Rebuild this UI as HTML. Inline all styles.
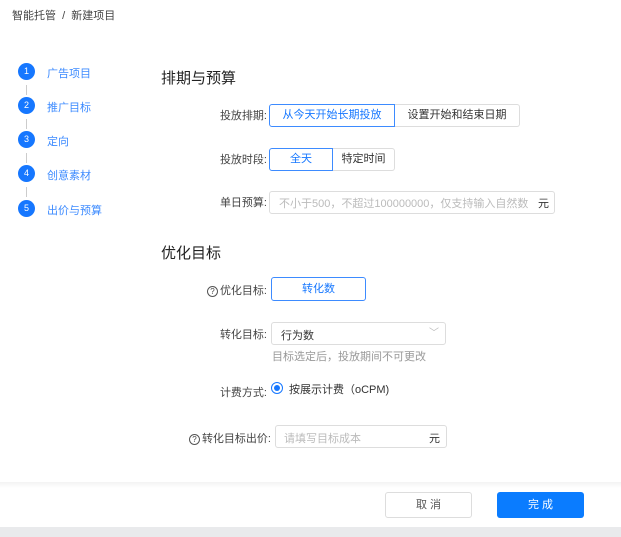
<!DOCTYPE html><html><head><meta charset="utf-8"><style>
*{margin:0;padding:0;box-sizing:border-box}
body{width:621px;height:537px;background:#fff;font-family:"Liberation Sans","Noto Sans CJK SC",sans-serif;font-size:11px;color:#333;position:relative;overflow:hidden}
.a{position:absolute;white-space:nowrap}
.c{width:17px;height:17px;border-radius:50%;background:#1677ff;color:#fff;font-size:9px;text-align:center;line-height:17px;left:18px}
.st{left:47px;color:#3d8bff;font-size:11px}
.ln{left:26px;width:1px;height:10px;background:#ccc}
.lab{text-align:right;color:#444;font-size:11px}
.b{border:1px solid #ddd;text-align:center;font-size:11px;color:#333}
.sel{border-color:#3d8bff;color:#1677ff}
h2{font-size:15px;font-weight:normal;color:#222}
.q{display:inline-block;width:11px;height:11px;border:1px solid #555;border-radius:50%;font-size:8px;line-height:9px;text-align:center;vertical-align:0px;margin-right:2px}
</style></head><body>
<div class="a" style="left:12px;top:7px;font-size:11px;color:#444">智能托管 &nbsp;/&nbsp; 新建项目</div>
<div class="a c" style="top:63px">1</div><div class="a st" style="top:65px">广告项目</div>
<div class="a ln" style="top:85px"></div>
<div class="a c" style="top:97px">2</div><div class="a st" style="top:99px">推广目标</div>
<div class="a ln" style="top:119px"></div>
<div class="a c" style="top:131px">3</div><div class="a st" style="top:133px">定向</div>
<div class="a ln" style="top:153px"></div>
<div class="a c" style="top:165px">4</div><div class="a st" style="top:167px">创意素材</div>
<div class="a ln" style="top:187px"></div>
<div class="a c" style="top:200px">5</div><div class="a st" style="top:202px">出价与预算</div>

<h2 class="a" style="left:161px;top:67px">排期与预算</h2>
<div class="a lab" style="right:354px;top:107px">投放排期:</div>
<div class="a b sel" style="left:269px;top:104px;width:126px;height:23px;line-height:21px;border-radius:3px 0 0 3px">从今天开始长期投放</div>
<div class="a b" style="left:395px;top:104px;width:125px;height:23px;line-height:21px;border-left:none;border-radius:0 3px 3px 0">设置开始和结束日期</div>
<div class="a lab" style="right:354px;top:151px">投放时段:</div>
<div class="a b sel" style="left:269px;top:148px;width:64px;height:23px;line-height:21px;border-radius:3px 0 0 3px">全天</div>
<div class="a b" style="left:333px;top:148px;width:62px;height:23px;line-height:21px;border-left:none;border-radius:0 3px 3px 0">特定时间</div>
<div class="a lab" style="right:354px;top:194px">单日预算:</div>
<div class="a b" style="left:269px;top:191px;width:286px;height:23px;border-radius:3px"></div>
<div class="a" style="left:279px;top:195px;color:#bbb">不小于500，不超过100000000，仅支持输入自然数</div>
<div class="a" style="left:538px;top:195px;color:#333">元</div>

<h2 class="a" style="left:161px;top:242px">优化目标</h2>
<div class="a lab" style="right:354px;top:282px"><span class="q">?</span>优化目标:</div>
<div class="a b sel" style="left:271px;top:277px;width:95px;height:24px;line-height:22px;border-radius:3px">转化数</div>
<div class="a lab" style="right:354px;top:326px">转化目标:</div>
<div class="a b" style="left:271px;top:322px;width:175px;height:23px;border-radius:3px"></div>
<div class="a" style="left:281px;top:327px">行为数</div>
<div class="a" style="left:429px;top:324px;color:#bbb;font-size:10px">﹀</div>
<div class="a" style="left:272px;top:348px;color:#999">目标选定后，投放期间不可更改</div>
<div class="a lab" style="right:354px;top:384px">计费方式:</div>
<div class="a" style="left:271px;top:382px;width:12px;height:12px;border:1px solid #1677ff;border-radius:50%"><div style="margin:2px;width:6px;height:6px;border-radius:50%;background:#1677ff"></div></div>
<div class="a" style="left:289px;top:381px">按展示计费（oCPM)</div>
<div class="a lab" style="right:350px;top:430px"><span class="q">?</span>转化目标出价:</div>
<div class="a b" style="left:275px;top:425px;width:172px;height:23px;border-radius:3px"></div>
<div class="a" style="left:284px;top:430px;color:#bbb">请填写目标成本</div>
<div class="a" style="left:429px;top:430px">元</div>

<div class="a" style="left:0;top:482px;width:621px;height:46px;background:linear-gradient(#f3f3f3,#fff 6px)"></div>
<div class="a b" style="left:385px;top:492px;width:87px;height:26px;line-height:24px;border-radius:3px;color:#555">取 消</div>
<div class="a" style="left:497px;top:492px;width:87px;height:26px;line-height:26px;border-radius:3px;background:#0a7cff;color:#fff;text-align:center">完 成</div>
<div class="a" style="left:0;top:527px;width:621px;height:10px;background:#e9eaec"></div>
</body></html>
